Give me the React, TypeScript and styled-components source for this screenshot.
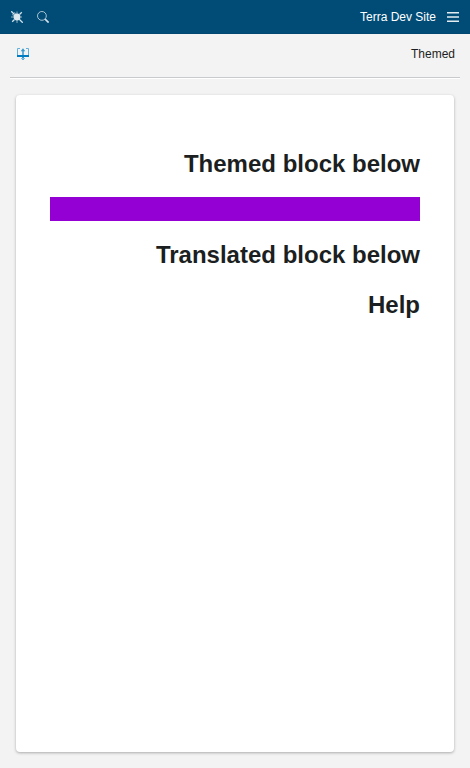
import React from 'react';
import styled, { createGlobalStyle } from 'styled-components';

const GlobalStyle = createGlobalStyle`
  * { box-sizing: border-box; }
  body { margin: 0; background: #f3f3f3; }
`;

const Page = styled.div`
  display: flex;
  flex-direction: column;
  height: 100vh;
  overflow: hidden;
  background: #f3f3f3;
  color: #1c1f21;
  font-family: "Liberation Sans", Arial, sans-serif;
  font-size: 12px;
  line-height: 14px;
`;

const Header = styled.header`
  display: flex;
  flex: none;
  align-items: center;
  justify-content: space-between;
  height: 34px;
  padding: 1px 11px 0;
  background: #004c76;
  border-bottom: 1px solid #004870;
  color: #fff;
`;

const Group = styled.div<{ $gap: number }>`
  display: flex;
  align-items: center;
  gap: ${({ $gap }) => $gap}px;
`;

const Icon = styled.svg`
  display: block;
  width: 12px;
  height: 12px;
`;

const Toolbar = styled.div`
  display: flex;
  flex: none;
  align-items: center;
  justify-content: space-between;
  height: 44px;
  margin: 0 10px;
  padding: 0 5px 3px 7px;
  border-bottom: 1px solid #c8cacb;
  box-shadow: 0 1px 0 #fff;
`;

const Card = styled.main`
  flex: 1;
  margin: 17px 16px 16px;
  padding: 55px 34px 0;
  background: #fff;
  border-radius: 4px;
  box-shadow: 0 1px 3px rgba(0, 0, 0, 0.3);
  text-align: right;
`;

const Heading = styled.h2`
  margin: 0 0 20px;
  font-size: 24px;
  line-height: 27px;
  font-weight: 700;
`;

const ThemedBlock = styled.div`
  height: 24px;
  margin-bottom: 20px;
  background: #9400d3;
`;

const TranslatedBlock = styled(Heading)`
  margin-top: 23px;
`;

const BugIcon = () => (
  <Icon viewBox="0 0 12 12" fill="none" stroke="#cfe0e9" strokeWidth="1.3">
    <path d="M.2.2l3.3 3.3M10.8 1.2L8.5 3.5M1.2 10.8l2.3-2.3M8 8l3.8 3.8" />
    <path d="M0 6h3M9 6h2M6 9v3M3.5 1.2l1 2M6 .5V3M1 3.5l2 1" strokeWidth="1" strokeOpacity=".65" />
    <circle cx="6" cy="6" r="3.4" fill="#dce8ee" stroke="none" />
  </Icon>
);

const SearchIcon = () => (
  <Icon viewBox="0 0 12 12" fill="none" stroke="#d3e2ea">
    <circle cx="4.9" cy="4.9" r="4.4" strokeWidth=".8" />
    <path d="M8.1 8.1l3.5 3.5" strokeWidth="1.6" />
  </Icon>
);

const MenuIcon = () => (
  <Icon viewBox="0 0 12 12">
    <path d="M0 1h12v1.5H0zM0 5.25h12v1.5H0zM0 9.5h12V11H0z" fill="#e5edf1" />
  </Icon>
);

const DisclosureIcon = () => (
  <Icon viewBox="0 0 12 12">
    <path d="M3 .5H.5V8M9 .5h2.5V8" fill="none" stroke="#64b0dc" />
    <path d="M0 7h12v2H0z" fill="#007cc3" />
    <path d="M5.25 2h1.5v5h-1.5zM3.7 3.2L6 .3l2.3 2.9zM5 9h2v2.7H5z" fill="#3297cf" />
    <path d="M4 10h4v1H4z" fill="#80bce0" />
  </Icon>
);

export default function App() {
  return (
    <Page>
      <GlobalStyle />
      <Header>
        <Group $gap={14}>
          <BugIcon />
          <SearchIcon />
        </Group>
        <Group $gap={11}>
          <span>Terra Dev Site</span>
          <MenuIcon />
        </Group>
      </Header>
      <Toolbar>
        <DisclosureIcon />
        <span>Themed</span>
      </Toolbar>
      <Card>
        <Heading>Themed block below</Heading>
        <ThemedBlock />
        <Heading>Translated block below</Heading>
        <TranslatedBlock>Help</TranslatedBlock>
      </Card>
    </Page>
  );
}
